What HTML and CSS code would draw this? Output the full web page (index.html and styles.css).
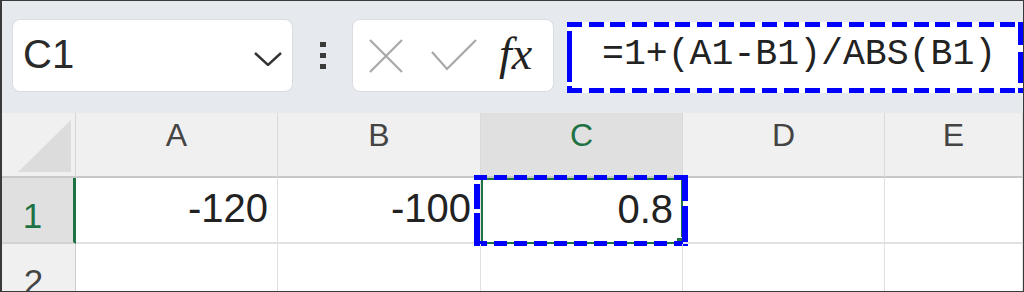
FILE: index.html
```html
<!DOCTYPE html>
<html lang="en">
<head>
    <meta charset="UTF-8">
    <meta name="viewport" content="width=device-width, initial-scale=1.0">
    <title>Formula bar - relative change</title>
    <link rel="stylesheet" href="styles.css">
</head>
<body>

    <div class="sheet">

        <!-- Name box, function buttons and formula bar -->
        <div class="toolbar">
            <div class="namebox">
                <span class="ref">C1</span>
                <svg class="chevron" width="28" height="14" viewBox="0 0 28 14">
                    <polyline points="1,1 14,13 27,1" fill="none" stroke="#333" stroke-width="2.4"/>
                </svg>
            </div>
            <div class="grip"><i></i><i></i><i></i></div>
            <div class="fnbox">
                <svg class="icon-x" width="34" height="34" viewBox="0 0 34 34">
                    <path d="M1 1 L33 33 M33 1 L1 33" stroke="#a8a8a8" stroke-width="2.2" fill="none"/>
                </svg>
                <svg class="icon-ok" width="46" height="32" viewBox="0 0 46 32">
                    <polyline points="1,13 16,30 45,1" fill="none" stroke="#a8a8a8" stroke-width="2.2"/>
                </svg>
                <span class="fx">fx</span>
            </div>
            <div class="formula">=1+(A1-B1)/ABS(B1)</div>
        </div>

        <!-- Worksheet grid -->
        <div class="grid">
            <div class="corner">
                <svg width="74" height="64" viewBox="0 0 74 64">
                    <polygon points="69,7 69,59 16,59" fill="#dcdcdc"/>
                </svg>
            </div>
            <div class="colhead">A</div>
            <div class="colhead">B</div>
            <div class="colhead selected">C</div>
            <div class="colhead">D</div>
            <div class="colhead">E</div>

            <div class="rowhead selected">1</div>
            <div class="cell num">-120</div>
            <div class="cell num">-100</div>
            <div class="cell num active">
                0.8
                <span class="handle"></span>
                <span class="marquee"></span>
            </div>
            <div class="cell"></div>
            <div class="cell"></div>

            <div class="rowhead">2</div>
            <div class="cell"></div>
            <div class="cell"></div>
            <div class="cell"></div>
            <div class="cell"></div>
            <div class="cell"></div>
        </div>

    </div>

</body>
</html>
```

FILE: styles.css
```css
body {
    margin: 0;
    background-color: #fff;
    font-family: "Liberation Sans", Arial, sans-serif;
    color: #333;
}
.sheet {
    width: 1024px;
    height: 292px;
    box-sizing: border-box;
    border: 1px solid #3a3a3a;
    border-left-width: 2px;
    overflow: hidden;
}
.toolbar {
    height: 112px;
    box-sizing: border-box;
    padding: 18px 0 0 10px;
    background-color: #e6e9ee;
    display: flex;
    align-items: flex-start;
}
.namebox {
    width: 281px;
    height: 73px;
    box-sizing: border-box;
    background-color: #fff;
    border: 1px solid #d9dce1;
    border-radius: 8px;
    display: flex;
    align-items: center;
    padding: 0 10px 0 10px;
}
.ref {
    font-size: 40px;
    color: #2a2a2a;
    padding-bottom: 2px;
}
.chevron {
    margin-left: auto;
    margin-top: 6px;
}
.grip {
    margin-left: 27px;
    margin-top: 23px;
    display: flex;
    flex-direction: column;
    gap: 6px;
}
.grip i {
    width: 6px;
    height: 5px;
    background-color: #3a3a3a;
}
.fnbox {
    width: 202px;
    height: 73px;
    box-sizing: border-box;
    margin-left: 26px;
    background-color: #fff;
    border: 1px solid #d9dce1;
    border-radius: 8px;
    display: flex;
    align-items: center;
    padding-left: 16px;
}
.icon-ok {
    margin-left: 28px;
    margin-top: -2px;
}
.fx {
    margin-left: 22px;
    font-family: "Liberation Serif", "Times New Roman", serif;
    font-style: italic;
    font-size: 46px;
    color: #222;
    padding-bottom: 4px;
}
.formula {
    flex: 1;
    height: 71px;
    margin: 3px 0 0 13px;
    box-sizing: border-box;
    padding: 0 0 6px 35px;
    display: flex;
    align-items: center;
    font-family: "Liberation Mono", "Courier New", monospace;
    font-size: 36.5px;
    color: #222;
    background:
        repeating-linear-gradient(90deg, #0000ff 0 15px, transparent 15px 21.67px) top left / 100% 5px no-repeat,
        repeating-linear-gradient(90deg, #0000ff 0 15px, transparent 15px 21.67px) bottom left / 100% 5px no-repeat,
        linear-gradient(180deg, #0000ff 0 5px, transparent 5px 9px, #0000ff 9px 60px, transparent 60px 64px, #0000ff 64px) left / 5px 100% no-repeat,
        linear-gradient(180deg, #0000ff 0 23px, transparent 23px 30px, #0000ff 30px 61px, transparent 61px 66px, #0000ff 66px) right / 5px 100% no-repeat,
        #fff;
}
.grid {
    display: grid;
    grid-template-columns: 74px 202px 203px 202px 202px 1fr;
    grid-template-rows: 65px 66px 1fr;
    height: 178px;
}
.corner {
    background-color: #f0f0f0;
    border-right: 1px solid #d6d6d6;
    border-bottom: 2px solid #c8c8c8;
    box-sizing: border-box;
}
.corner svg {
    display: block;
}
.colhead {
    background-color: #f0f0f0;
    border-right: 1px solid #dadada;
    border-bottom: 2px solid #c8c8c8;
    box-sizing: border-box;
    display: flex;
    justify-content: center;
    align-items: center;
    padding-bottom: 18px;
    font-size: 32px;
    color: #444;
}
.colhead.selected {
    background-color: #e0e0e0;
    color: #1f7244;
}
.rowhead {
    background-color: #f0f0f0;
    border-right: 1px solid #cfcfcf;
    border-bottom: 2px solid #d2d2d2;
    box-sizing: border-box;
    display: flex;
    justify-content: center;
    align-items: flex-start;
    padding: 20px 10px 0 0;
    font-size: 35px;
    line-height: 1;
    color: #444;
}
.rowhead.selected {
    background-color: #e0e0e0;
    border-right: 3px solid #1f7244;
    color: #1f7244;
}
.cell {
    border-right: 1px solid #e1e1e1;
    border-bottom: 2px solid #e1e1e1;
    box-sizing: border-box;
    position: relative;
}
.num {
    display: flex;
    justify-content: flex-end;
    align-items: center;
    padding: 0 9px 4px 0;
    font-size: 40px;
    color: #222;
}
.active {
    border: 2px solid #1f7244;
    padding-right: 8px;
}
.handle {
    position: absolute;
    right: -5px;
    bottom: -5px;
    width: 8px;
    height: 8px;
    background-color: #1f7244;
    border: 1px solid #fff;
}
.marquee {
    position: absolute;
    left: -9px;
    right: -7px;
    top: -5px;
    bottom: -4px;
    background:
        repeating-linear-gradient(90deg, #0000ff 0 13px, transparent 13px 20px) top left / 100% 5px no-repeat,
        repeating-linear-gradient(90deg, #0000ff 0 13px, transparent 13px 20px) bottom left / 100% 5px no-repeat,
        linear-gradient(180deg, #0000ff 0 5px, transparent 5px 9px, #0000ff 9px 34px, transparent 34px 38px, #0000ff 38px 66px, transparent 66px 68px, #0000ff 68px) left / 6px 100% no-repeat,
        linear-gradient(180deg, #0000ff 0 26px, transparent 26px 31px, #0000ff 31px) right / 6px 100% no-repeat;
}
```
